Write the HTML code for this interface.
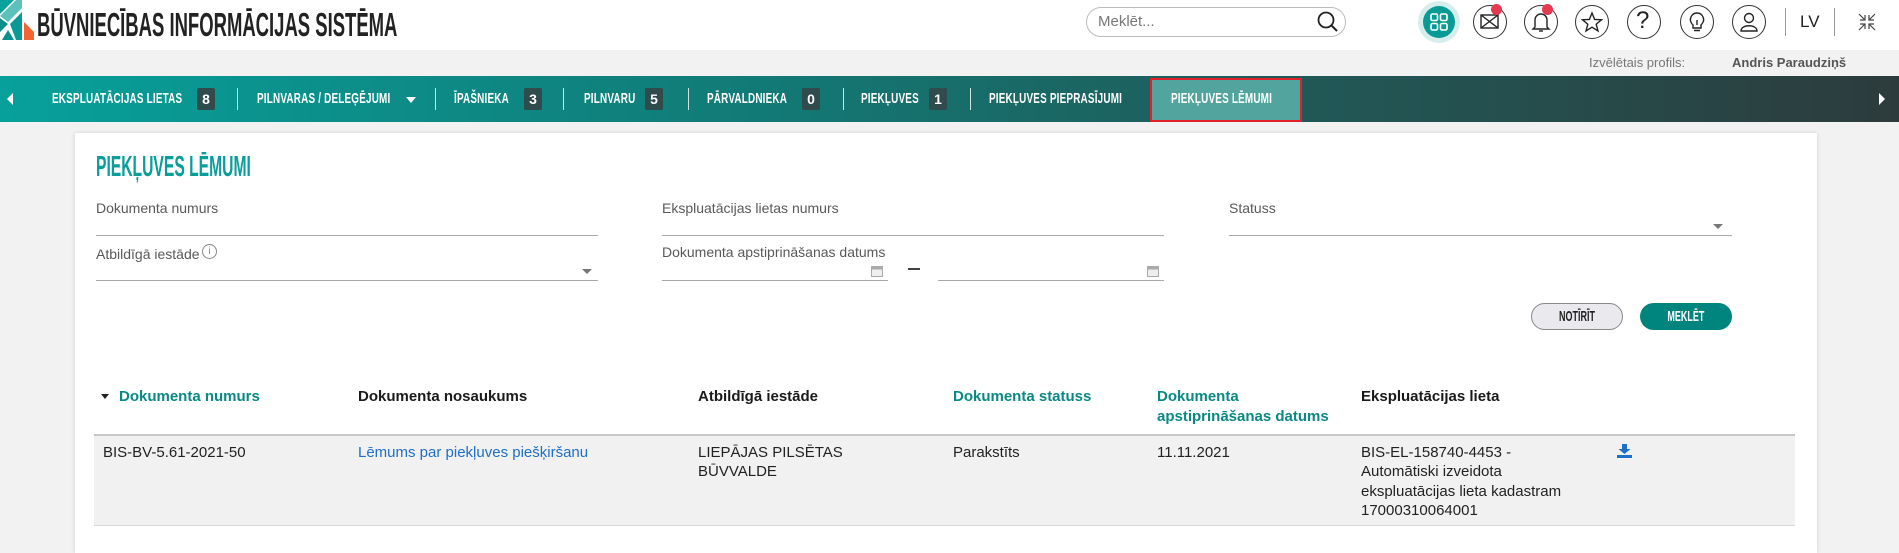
<!DOCTYPE html>
<html><head><meta charset="utf-8">
<style>
*{margin:0;padding:0;box-sizing:border-box}
body{width:1899px;height:543px;overflow:hidden;background:#f2f2f2;font-family:"Liberation Sans",Arial,sans-serif;position:relative}
.a{position:absolute;white-space:nowrap}
.cond{display:inline-block;transform-origin:0 50%;font-weight:bold}
#hdr{position:absolute;left:0;top:0;width:1899px;height:50px;background:#fff}
#nav{position:absolute;left:0;top:76px;width:1899px;height:46px;background:linear-gradient(90deg,#07a09b 0%,#127a76 40%,#1f5c5a 65%,#2d3b3c 100%)}
.nl{position:absolute;top:0;height:46px;line-height:46px;color:#fff;font-size:15px}
.nl span{display:inline-block;transform:scaleX(.66);transform-origin:0 50%;font-weight:bold;letter-spacing:.3px}
.bd{position:absolute;top:12px;width:18px;height:22px;background:#2f4b4b;border-radius:2px;color:#fff;font-weight:bold;font-size:14px;line-height:22px;text-align:center}
.sep{position:absolute;top:12px;width:1px;height:22px;background:#cfe3e2}
.ic{position:absolute;top:5px;width:34px;height:34px;border:1.5px solid #333;border-radius:50%}
.lbl{position:absolute;color:#595959;font-size:14px}
.ln{position:absolute;height:1px;background:#aaa}
.th{position:absolute;top:387px;font-size:15px;font-weight:bold;color:#1a1a1a;line-height:20px}
.tt{color:#0a8984}
.td{position:absolute;top:443px;font-size:15px;color:#222;line-height:19.3px}
.sa{position:absolute;width:0;height:0;border-left:5px solid transparent;border-right:5px solid transparent;border-top:6px solid #777}
</style></head><body>
<div id="hdr">
  <svg class="a" style="left:0;top:0" width="34" height="42" viewBox="0 0 34 42">
    <polygon points="0,0 14,0 0,14" fill="#0aa29c"/>
    <polygon points="16,0 22,0 22,8 8,22 0,16" fill="#5cc0bc"/>
    <polygon points="0,18 8,24 0,32" fill="#0a8f8a"/>
    <polygon points="10,24 22,12 22,40 16,40" fill="#0a9a95"/>
    <polygon points="2,40 8,30 14,40" fill="#0a8f8a"/>
    <polygon points="24,22 34,32 34,40 24,40" fill="#f26431"/>
  </svg>
  <div class="a" style="left:37px;top:5px;font-size:33px;line-height:40px;color:#222"><span class="cond" style="transform:scaleX(.56)">BŪVNIECĪBAS INFORMĀCIJAS SISTĒMA</span></div>
  <div class="a" style="left:1086px;top:7px;width:260px;height:30px;border:1px solid #bbb;border-radius:15px;background:#fff"></div>
  <div class="a" style="left:1098px;top:13px;font-size:15px;color:#777">Meklēt...</div>
  <svg class="a" style="left:1316px;top:10px" width="24" height="24" viewBox="0 0 24 24"><circle cx="10" cy="10" r="7.5" fill="none" stroke="#222" stroke-width="1.8"/><line x1="15.5" y1="15.5" x2="21" y2="21" stroke="#222" stroke-width="2"/></svg>
  <div class="a" style="left:1418px;top:1px;width:42px;height:42px;border-radius:50%;background:#d5eeec"></div>
  <div class="a" style="left:1423px;top:6px;width:32px;height:32px;border-radius:50%;background:#089b95"></div>
  <svg class="a" style="left:1429px;top:12px" width="20" height="20" viewBox="0 0 20 20" fill="none" stroke="#fff" stroke-width="1.6"><rect x="2" y="2" width="6.5" height="6.5" rx="1.5"/><rect x="11.5" y="2" width="6.5" height="6.5" rx="1.5"/><rect x="2" y="11.5" width="6.5" height="6.5" rx="1.5"/><rect x="11.5" y="11.5" width="6.5" height="6.5" rx="1.5"/></svg>
  <div class="ic" style="left:1473px"></div>
  <svg class="a" style="left:1480px;top:14px" width="20" height="16" viewBox="0 0 20 16" fill="none" stroke="#222" stroke-width="1.4"><rect x="1" y="1" width="17" height="13"/><path d="M1 1 L18 14 M18 1 L1 14"/></svg>
  <div class="a" style="left:1491px;top:4px;width:11px;height:11px;border-radius:50%;background:#e53950"></div>
  <div class="ic" style="left:1524px"></div>
  <svg class="a" style="left:1531px;top:10px" width="20" height="24" viewBox="0 0 20 24" fill="none" stroke="#222" stroke-width="1.4"><path d="M4 17 V10 a6 6 0 0 1 12 0 V17 L18 19 H2 Z"/><path d="M8 21 h4"/></svg>
  <div class="a" style="left:1542px;top:4px;width:11px;height:11px;border-radius:50%;background:#e53950"></div>
  <div class="ic" style="left:1575px"></div>
  <svg class="a" style="left:1581px;top:11px" width="22" height="22" viewBox="0 0 22 22"><polygon points="11,2 13.6,8.4 20.5,8.8 15.2,13.2 17,20 11,16.2 5,20 6.8,13.2 1.5,8.8 8.4,8.4" fill="none" stroke="#222" stroke-width="1.4"/></svg>
  <div class="ic" style="left:1627px"></div>
  <div class="a" style="left:1636px;top:7px;font-size:24px;color:#222">?</div>
  <div class="ic" style="left:1680px"></div>
  <svg class="a" style="left:1688px;top:11px" width="18" height="22" viewBox="0 0 18 22" fill="none" stroke="#222" stroke-width="1.4"><path d="M5 14 C2 11 2 8 3 6 A6.5 6.5 0 0 1 15 6 C16 8 16 11 13 14 V17 H5 Z"/><path d="M6 19.5 h6 M9 14 v-5"/></svg>
  <div class="ic" style="left:1732px"></div>
  <svg class="a" style="left:1739px;top:11px" width="20" height="22" viewBox="0 0 20 22" fill="none" stroke="#222" stroke-width="1.4"><circle cx="10" cy="7" r="4.5"/><path d="M2 20 C2 13 18 13 18 20 Z"/></svg>
  <div class="a" style="left:1785px;top:8px;width:1px;height:28px;background:#999"></div>
  <div class="a" style="left:1800px;top:12px;font-size:17px;color:#222">LV</div>
  <div class="a" style="left:1834px;top:8px;width:1px;height:28px;background:#999"></div>
  <svg class="a" style="left:1857px;top:12px" width="20" height="20" viewBox="0 0 20 20" fill="none" stroke="#444" stroke-width="1.2"><path d="M2 2 L8 8 M8 3 V8 H3 M18 2 L12 8 M12 3 V8 H17 M2 18 L8 12 M8 17 V12 H3 M18 18 L12 12 M12 17 V12 H17"/></svg>
</div>
<div class="a" style="left:1589px;top:55px;font-size:13px;color:#777">Izvēlētais profils:</div>
<div class="a" style="left:1732px;top:55px;font-size:13px;color:#555;font-weight:bold">Andris Paraudziņš</div>

<div id="nav">
  <div class="a" style="left:7px;top:17px;width:0;height:0;border-top:6px solid transparent;border-bottom:6px solid transparent;border-right:6px solid #fff"></div>
  <div class="nl" style="left:52px"><span>EKSPLUATĀCIJAS LIETAS</span></div><div class="bd" style="left:197px">8</div>
  <div class="sep" style="left:237px"></div>
  <div class="nl" style="left:257px"><span>PILNVARAS / DELEĢĒJUMI</span></div>
  <div class="a" style="left:406px;top:21px;border-left:5px solid transparent;border-right:5px solid transparent;border-top:6px solid #fff"></div>
  <div class="sep" style="left:435px"></div>
  <div class="nl" style="left:454px"><span>ĪPAŠNIEKA</span></div><div class="bd" style="left:524px">3</div>
  <div class="sep" style="left:563px"></div>
  <div class="nl" style="left:584px"><span>PILNVARU</span></div><div class="bd" style="left:645px">5</div>
  <div class="sep" style="left:688px"></div>
  <div class="nl" style="left:707px"><span>PĀRVALDNIEKA</span></div><div class="bd" style="left:802px">0</div>
  <div class="sep" style="left:843px"></div>
  <div class="nl" style="left:861px"><span>PIEKĻUVES</span></div><div class="bd" style="left:929px">1</div>
  <div class="sep" style="left:970px"></div>
  <div class="nl" style="left:989px"><span>PIEKĻUVES PIEPRASĪJUMI</span></div>
  <div class="a" style="left:1150px;top:2px;width:152px;height:44px;background:#52a59e;border:2px solid #e0202a"></div>
  <div class="nl" style="left:1171px"><span>PIEKĻUVES LĒMUMI</span></div>
  <div class="a" style="left:1879px;top:17px;width:0;height:0;border-top:6px solid transparent;border-bottom:6px solid transparent;border-left:6px solid #fff"></div>
</div>

<div class="a" style="left:75px;top:133px;width:1742px;height:420px;background:#fff;box-shadow:0 0 4px rgba(0,0,0,.15)"></div>
<div class="a" style="left:96px;top:151px;font-size:29px;line-height:32px;color:#0a9e9a"><span class="cond" style="transform:scaleX(.54)">PIEKĻUVES LĒMUMI</span></div>

<div class="lbl" style="left:96px;top:200px">Dokumenta numurs</div>
<div class="ln" style="left:96px;top:235px;width:502px"></div>
<div class="lbl" style="left:662px;top:200px">Ekspluatācijas lietas numurs</div>
<div class="ln" style="left:662px;top:235px;width:502px"></div>
<div class="lbl" style="left:1229px;top:200px">Statuss</div>
<div class="ln" style="left:1229px;top:235px;width:503px"></div>
<div class="sa" style="left:1713px;top:224px;border-top-width:5px"></div>

<div class="lbl" style="left:96px;top:246px">Atbildīgā iestāde</div>
<div class="a" style="left:202px;top:244px;width:15px;height:15px;border:1px solid #888;border-radius:50%;font-size:10px;color:#888;text-align:center;line-height:13px">i</div>
<div class="ln" style="left:96px;top:280px;width:502px"></div>
<div class="sa" style="left:582px;top:269px;border-top-width:5px"></div>

<div class="lbl" style="left:662px;top:244px">Dokumenta apstiprināšanas datums</div>
<div class="ln" style="left:662px;top:280px;width:226px"></div>
<div class="ln" style="left:938px;top:280px;width:226px"></div>
<svg class="a" style="left:871px;top:265px" width="12" height="12" viewBox="0 0 12 12"><rect x="0.5" y="1.5" width="11" height="10" fill="#eee" stroke="#aaa"/><rect x="0.5" y="1.5" width="11" height="3" fill="#aaa"/></svg>
<svg class="a" style="left:1147px;top:265px" width="12" height="12" viewBox="0 0 12 12"><rect x="0.5" y="1.5" width="11" height="10" fill="#eee" stroke="#aaa"/><rect x="0.5" y="1.5" width="11" height="3" fill="#aaa"/></svg>
<div class="a" style="left:908px;top:268px;width:12px;height:2px;background:#444"></div>

<div class="a" style="left:1531px;top:303px;width:92px;height:27px;border:1px solid #888;border-radius:14px;background:#e9e9ee;text-align:center;line-height:25px;font-size:15px;color:#222"><span class="cond" style="transform:scaleX(.6);transform-origin:50% 50%">NOTĪRĪT</span></div>
<div class="a" style="left:1640px;top:303px;width:92px;height:27px;border-radius:14px;background:#00857e;text-align:center;line-height:27px;font-size:15px;color:#fff"><span class="cond" style="transform:scaleX(.6);transform-origin:50% 50%">MEKLĒT</span></div>

<div class="a" style="left:101px;top:394px;border-left:4px solid transparent;border-right:4px solid transparent;border-top:5px solid #222"></div>
<div class="th tt" style="left:119px">Dokumenta numurs</div>
<div class="th" style="left:358px">Dokumenta nosaukums</div>
<div class="th" style="left:698px">Atbildīgā iestāde</div>
<div class="th tt" style="left:953px">Dokumenta statuss</div>
<div class="th tt" style="left:1157px">Dokumenta<br>apstiprināšanas datums</div>
<div class="th" style="left:1361px">Ekspluatācijas lieta</div>

<div class="a" style="left:94px;top:434px;width:1701px;height:92px;background:#f1f1f1;border-top:2px solid #c8c8c8;border-bottom:1px solid #d8d8d8"></div>
<div class="td" style="left:103px">BIS-BV-5.61-2021-50</div>
<div class="td" style="left:358px;color:#1e6fc8">Lēmums par piekļuves piešķiršanu</div>
<div class="td" style="left:698px">LIEPĀJAS PILSĒTAS<br>BŪVVALDE</div>
<div class="td" style="left:953px">Parakstīts</div>
<div class="td" style="left:1157px">11.11.2021</div>
<div class="td" style="left:1361px">BIS-EL-158740-4453 -<br>Automātiski izveidota<br>ekspluatācijas lieta kadastram<br>17000310064001</div>
<svg class="a" style="left:1617px;top:444px" width="15" height="14" viewBox="0 0 15 14"><path d="M5 0 H10 V5 H13.5 L7.5 10 L1.5 5 H5 Z" fill="#1e6fc8"/><rect x="0" y="11" width="15" height="3" fill="#1e6fc8"/></svg>
</body></html>
